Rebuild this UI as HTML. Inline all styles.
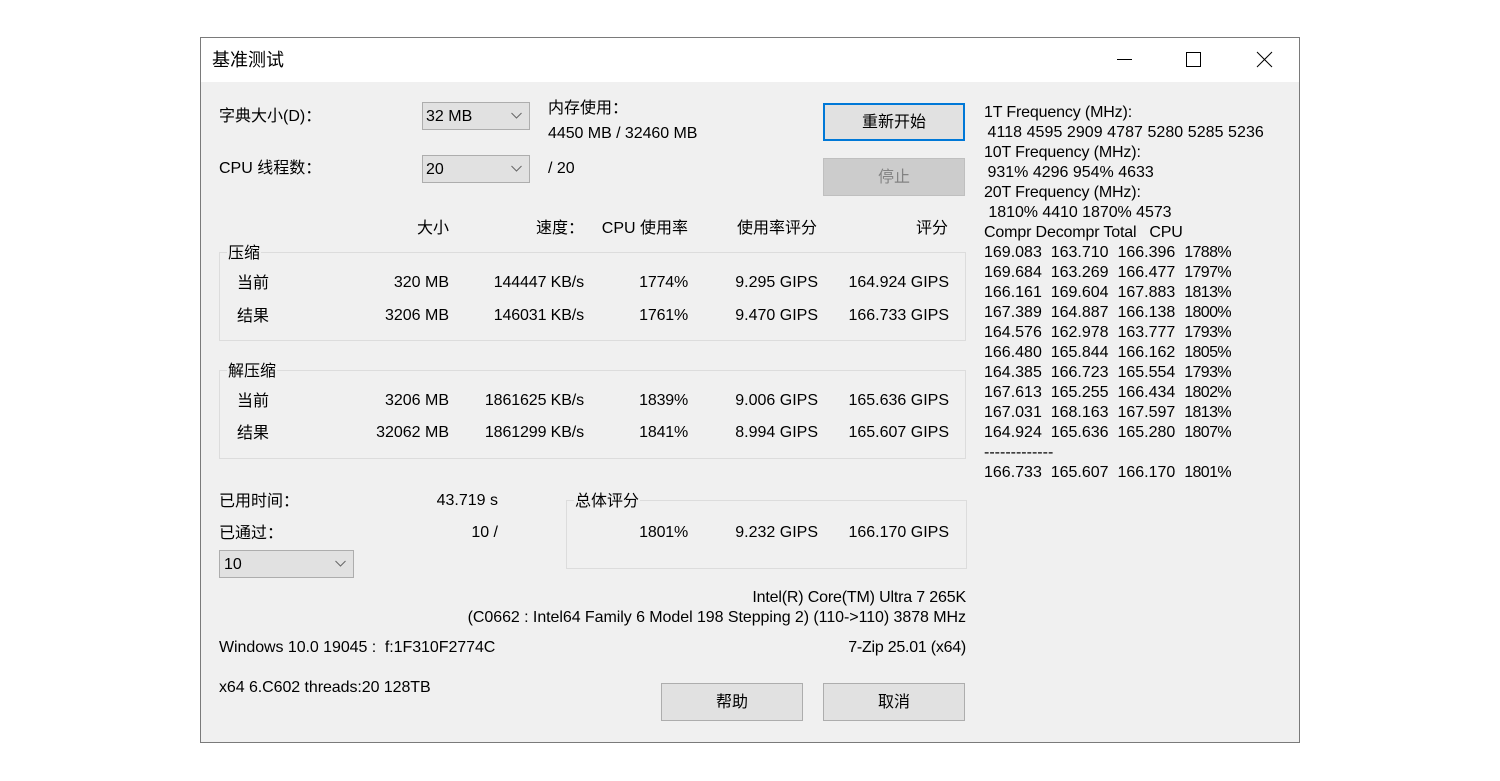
<!DOCTYPE html>
<html><head><meta charset="utf-8"><style>
html,body{margin:0;padding:0;background:#fff;width:1500px;height:781px;overflow:hidden}
body{position:relative;font:16px/20px "Liberation Sans","Noto Sans CJK SC",sans-serif;color:#000}
#w{position:absolute;left:200px;top:37px;width:1098px;height:704px;border:1px solid #7a7a7a;background:#f0f0f0}
#tb{position:absolute;left:201px;top:38px;width:1098px;height:44px;background:#fff}
.t{position:absolute;white-space:pre;line-height:20px;height:20px}
.r{position:absolute;white-space:pre;line-height:20px;height:20px;text-align:right;width:200px}
.k{letter-spacing:-.12px}
.p{letter-spacing:-.2px}
.b{position:absolute;box-sizing:border-box;border:1px solid #adadad;background:#e1e1e1;text-align:center;width:142px;height:38px;line-height:38px}
.c{position:absolute;box-sizing:border-box;border:1px solid #adadad;background:#e1e1e1;height:28px;line-height:28px;padding-left:3px}
.c svg{position:absolute;left:88px;top:7px}
.g{position:absolute;box-sizing:border-box;border:1px solid #dcdcdc}
.l{position:absolute;background:#f0f0f0;padding:0 1px;line-height:20px;height:20px;white-space:pre}
pre{margin:0;position:absolute;left:984px;top:103px;font:16px/20px "Liberation Sans",sans-serif;letter-spacing:0}
pre i{font-style:normal;letter-spacing:-.6px}
pre b{font-weight:normal;letter-spacing:-.15px}
pre u{text-decoration:none;margin-left:-1px}
</style></head><body>
<div id="w"></div><div id="tb"></div>
<div class="t" style="left:212px;top:50px;font-size:18px">基准测试</div>
<svg style="position:absolute;left:1100px;top:40px" width="190" height="40" fill="none" stroke="#000" stroke-width="1"><path d="M17 19.5H32"/><rect x="86.5" y="12.5" width="14" height="14"/><path d="M157 12L172 27M172 12L157 27"/></svg>

<div class="t" style="left:219px;top:107px">字典大小(D)：</div>
<div class="c" style="left:422px;top:102px;width:108px">32 MB<svg width="12" height="12" fill="none" stroke="#666"><path d="M.5 3L5.5 8L10.5 3"/></svg></div>
<div class="t" style="left:548px;top:99px">内存使用：</div>
<div class="t" style="left:548px;top:124px;letter-spacing:-.05px">4450 MB / 32460 MB</div>
<div class="b" style="left:823px;top:103px;border:2px solid #0078d7;line-height:36px">重新开始</div>
<div class="t" style="left:219px;top:159px">CPU 线程数：</div>
<div class="c" style="left:422px;top:155px;width:108px">20<svg width="12" height="12" fill="none" stroke="#666"><path d="M.5 3L5.5 8L10.5 3"/></svg></div>
<div class="t" style="left:548px;top:159px">/ 20</div>
<div class="b" style="left:823px;top:158px;background:#ccc;border-color:#bfbfbf;color:#838383">停止</div>

<div class="r" style="left:249px;top:219px">大小</div>
<div class="r" style="left:384px;top:219px">速度：</div>
<div class="r" style="left:488px;top:219px">CPU 使用率</div>
<div class="r" style="left:617px;top:219px">使用率评分</div>
<div class="r" style="left:748px;top:219px">评分</div>

<div class="g" style="left:219px;top:252px;width:747px;height:89px"></div>
<div class="l" style="left:227px;top:244px">压缩</div>
<div class="t" style="left:237px;top:274px">当前</div>
<div class="r" style="left:249px;top:273px">320 MB</div><div class="r k" style="left:384px;top:273px">144447 KB/s</div><div class="r p" style="left:488px;top:273px">1774%</div><div class="r" style="left:618px;top:273px">9.295 GIPS</div><div class="r" style="left:749px;top:273px">164.924 GIPS</div>
<div class="t" style="left:237px;top:307px">结果</div>
<div class="r" style="left:249px;top:306px">3206 MB</div><div class="r k" style="left:384px;top:306px">146031 KB/s</div><div class="r p" style="left:488px;top:306px">1761%</div><div class="r" style="left:618px;top:306px">9.470 GIPS</div><div class="r" style="left:749px;top:306px">166.733 GIPS</div>

<div class="g" style="left:219px;top:370px;width:747px;height:89px"></div>
<div class="l" style="left:227px;top:362px">解压缩</div>
<div class="t" style="left:237px;top:392px">当前</div>
<div class="r" style="left:249px;top:391px">3206 MB</div><div class="r k" style="left:384px;top:391px">1861625 KB/s</div><div class="r p" style="left:488px;top:391px">1839%</div><div class="r" style="left:618px;top:391px">9.006 GIPS</div><div class="r" style="left:749px;top:391px">165.636 GIPS</div>
<div class="t" style="left:237px;top:424px">结果</div>
<div class="r" style="left:249px;top:423px">32062 MB</div><div class="r k" style="left:384px;top:423px">1861299 KB/s</div><div class="r p" style="left:488px;top:423px">1841%</div><div class="r" style="left:618px;top:423px">8.994 GIPS</div><div class="r" style="left:749px;top:423px">165.607 GIPS</div>

<div class="t" style="left:219px;top:492px">已用时间：</div>
<div class="r" style="left:298px;top:491px">43.719 s</div>
<div class="t" style="left:219px;top:524px">已通过：</div>
<div class="r" style="left:298px;top:523px">10 /</div>
<div class="c" style="left:219px;top:550px;width:135px;padding-left:4px">10<svg width="12" height="12" fill="none" stroke="#666" style="left:115px"><path d="M.5 3L5.5 8L10.5 3"/></svg></div>

<div class="g" style="left:566px;top:500px;width:401px;height:69px"></div>
<div class="l" style="left:574px;top:492px">总体评分</div>
<div class="r p" style="left:488px;top:523px">1801%</div><div class="r" style="left:618px;top:523px">9.232 GIPS</div><div class="r" style="left:749px;top:523px">166.170 GIPS</div>

<div class="r" style="left:566px;top:588px;width:400px;letter-spacing:-.17px">Intel(R) Core(TM) Ultra 7 265K</div>
<div class="r" style="left:366px;top:608px;width:600px;letter-spacing:-.06px">(C0662 : Intel64 Family 6 Model 198 Stepping 2) (110-&gt;110) 3878 MHz</div>
<div class="t" style="left:219px;top:638px;letter-spacing:-.06px">Windows 10.0 19045 :  f:1F310F2774C</div>
<div class="r" style="left:766px;top:638px;letter-spacing:-.24px">7-Zip 25.01 (x64)</div>
<div class="t" style="left:219px;top:678px;letter-spacing:-.07px">x64 6.C602 threads:20 128TB</div>
<div class="b" style="left:661px;top:683px">帮助</div>
<div class="b" style="left:823px;top:683px">取消</div>

<pre><b>1T Frequency (MHz):</b>
<u style="letter-spacing:.05px"> 4118 4595 2909 4787 5280 5285 5236</u>
<b>10T Frequency (MHz):</b>
<u> 931% 4296 954% 4633</u>
<b>20T Frequency (MHz):</b>
<span style="letter-spacing:-.05px"> 1810% 4410 1870% 4573</span>
<b>Compr Decompr Total   CPU</b>
169.083  163.710  166.396  <i>1788%</i>
169.684  163.269  166.477  <i>1797%</i>
166.161  169.604  167.883  <i>1813%</i>
167.389  164.887  166.138  <i>1800%</i>
164.576  162.978  163.777  <i>1793%</i>
166.480  165.844  166.162  <i>1805%</i>
164.385  166.723  165.554  <i>1793%</i>
167.613  165.255  166.434  <i>1802%</i>
167.031  168.163  167.597  <i>1813%</i>
164.924  165.636  165.280  <i>1807%</i>
-------------
166.733  165.607  166.170  <i>1801%</i></pre>
</body></html>
